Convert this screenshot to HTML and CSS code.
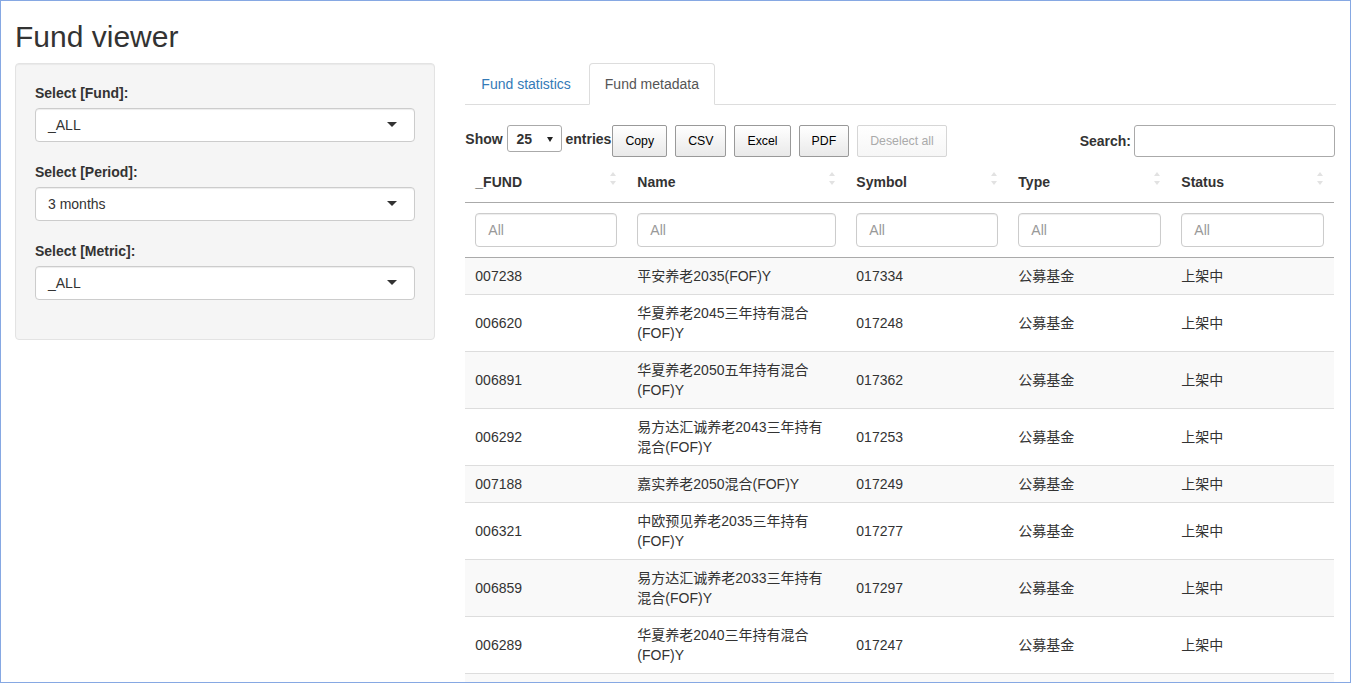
FILE: index.html
```html
<!DOCTYPE html>
<html lang="en">
<head>
<meta charset="utf-8">
<title>Fund viewer</title>
<link rel="stylesheet" href="styles.css">
</head>
<body>
<div class="container">
  <h2 class="title">Fund viewer</h2>
  <div class="row">
    <div class="col-side">
      <div class="well">
        <div class="form-group">
          <label class="control-label">Select [Fund]:</label>
          <div class="selectize"><span>_ALL</span><span class="caret"></span></div>
        </div>
        <div class="form-group">
          <label class="control-label">Select [Period]:</label>
          <div class="selectize"><span>3 months</span><span class="caret"></span></div>
        </div>
        <div class="form-group">
          <label class="control-label">Select [Metric]:</label>
          <div class="selectize"><span>_ALL</span><span class="caret"></span></div>
        </div>
      </div>
    </div>
    <div class="col-main">
      <ul class="nav-tabs">
        <li><a class="tab">Fund statistics</a></li>
        <li><a class="tab active">Fund metadata</a></li>
      </ul>
      <div class="dt-wrapper">
        <div class="dt-top">
          <div class="dt-length">Show <span class="len-select">25<span class="len-arrow"></span></span> entries</div>
          <div class="dt-buttons">
            <button class="dt-button">Copy</button>
            <button class="dt-button">CSV</button>
            <button class="dt-button">Excel</button>
            <button class="dt-button">PDF</button>
            <button class="dt-button disabled">Deselect all</button>
          </div>
          <div class="dt-filter">Search:<span class="search-input"></span></div>
        </div>
        <table class="dt-table">
          <colgroup>
            <col class="c1"><col class="c2"><col class="c3"><col class="c4"><col class="c5">
          </colgroup>
          <thead>
            <tr class="head-row">
              <th class="sorting">_FUND</th>
              <th class="sorting">Name</th>
              <th class="sorting">Symbol</th>
              <th class="sorting">Type</th>
              <th class="sorting">Status</th>
            </tr>
            <tr class="filter-row">
              <td><div class="filter-input">All</div></td>
              <td><div class="filter-input">All</div></td>
              <td><div class="filter-input">All</div></td>
              <td><div class="filter-input">All</div></td>
              <td><div class="filter-input">All</div></td>
            </tr>
          </thead>
          <tbody>
            <tr class="odd"><td>007238</td><td>平安养老2035(FOF)Y</td><td>017334</td><td>公募基金</td><td>上架中</td></tr>
            <tr class="even"><td>006620</td><td>华夏养老2045三年持有混合(FOF)Y</td><td>017248</td><td>公募基金</td><td>上架中</td></tr>
            <tr class="odd"><td>006891</td><td>华夏养老2050五年持有混合(FOF)Y</td><td>017362</td><td>公募基金</td><td>上架中</td></tr>
            <tr class="even"><td>006292</td><td>易方达汇诚养老2043三年持有混合(FOF)Y</td><td>017253</td><td>公募基金</td><td>上架中</td></tr>
            <tr class="odd"><td>007188</td><td>嘉实养老2050混合(FOF)Y</td><td>017249</td><td>公募基金</td><td>上架中</td></tr>
            <tr class="even"><td>006321</td><td>中欧预见养老2035三年持有(FOF)Y</td><td>017277</td><td>公募基金</td><td>上架中</td></tr>
            <tr class="odd"><td>006859</td><td>易方达汇诚养老2033三年持有混合(FOF)Y</td><td>017297</td><td>公募基金</td><td>上架中</td></tr>
            <tr class="even"><td>006289</td><td>华夏养老2040三年持有混合(FOF)Y</td><td>017247</td><td>公募基金</td><td>上架中</td></tr>
            <tr class="odd"><td>&nbsp;</td><td>&nbsp;</td><td>&nbsp;</td><td>&nbsp;</td><td>&nbsp;</td></tr>
          </tbody>
        </table>
      </div>
    </div>
  </div>
</div>
</body>
</html>
```
FILE: styles.css
```css
* { box-sizing: border-box; }

html, body { height: 100%; }

body {
  margin: 0;
  overflow: hidden;
  background: #fff;
  font-family: "Liberation Sans", "Noto Sans CJK SC", sans-serif;
  font-size: 14px;
  line-height: 20px;
  color: #333;
}

/* window frame drawn over the page */
body::after {
  content: "";
  position: fixed;
  top: 0;
  left: 0;
  right: 0;
  bottom: 0;
  border: 1px solid #86a8e3;
  pointer-events: none;
}

.container {
  padding: 0 15px;
}

.title {
  margin: 20px 0 10px;
  font-size: 30px;
  line-height: 33px;
  font-weight: 500;
  color: #333;
}

.row {
  display: flex;
  margin: 0 -15px;
}

.col-side {
  width: 33.3333%;
  padding: 0 15px;
}

.col-main {
  width: 66.6667%;
  padding: 0 15px;
}

/* sidebar */
.well {
  background: #f5f5f5;
  border: 1px solid #e3e3e3;
  border-radius: 4px;
  box-shadow: inset 0 1px 1px rgba(0,0,0,0.05);
  padding: 19px;
}

.form-group {
  padding-bottom: 20px;
}

.control-label {
  display: block;
  font-weight: bold;
  line-height: 20px;
  margin-bottom: 5px;
}

.selectize {
  position: relative;
  display: flex;
  align-items: center;
  height: 34px;
  padding: 6px 12px;
  background: #fff;
  border: 1px solid #ccc;
  border-radius: 4px;
  box-shadow: inset 0 1px 1px rgba(0,0,0,0.075);
  color: #333;
}

.caret {
  position: absolute;
  right: 17px;
  top: 50%;
  margin-top: -3px;
  width: 0;
  height: 0;
  border-style: solid;
  border-width: 5px 5px 0 5px;
  border-color: #333 transparent transparent transparent;
}

/* tabs */
.nav-tabs {
  display: flex;
  list-style: none;
  margin: 0;
  padding: 0;
  border-bottom: 1px solid #ddd;
}

.nav-tabs li {
  margin-bottom: -1px;
}

.tab {
  display: block;
  padding: 10px 15px;
  margin-right: 2px;
  line-height: 20px;
  border: 1px solid transparent;
  border-radius: 4px 4px 0 0;
  color: #337ab7;
  text-decoration: none;
}

.tab.active {
  color: #555;
  background: #fff;
  border-color: #ddd #ddd transparent;
}

/* datatable */
.dt-wrapper {
  padding-top: 20px;
}

.dt-top {
  display: flex;
  align-items: flex-start;
}

.dt-length {
  display: flex;
  align-items: center;
  font-weight: bold;
  white-space: pre;
}

.len-select {
  position: relative;
  display: inline-block;
  width: 55px;
  height: 27px;
  padding: 3px 9px;
  border: 1px solid #aaa;
  border-radius: 3px;
  background: #fff;
  font-weight: bold;
  color: #333;
}

.len-arrow {
  position: absolute;
  right: 8px;
  top: 11px;
  width: 0;
  height: 0;
  border-style: solid;
  border-width: 5px 3px 0 3px;
  border-color: #222 transparent transparent transparent;
}

.dt-buttons {
  display: flex;
  margin-left: 1px;
}

.dt-button {
  margin: 0 8px 0 0;
  padding: 6px 12px;
  height: 32px;
  border: 1px solid #999;
  border-radius: 2px;
  font-family: "Liberation Sans", sans-serif;
  font-size: 12.32px;
  line-height: 18px;
  color: #000;
  background-color: #e9e9e9;
  background-image: linear-gradient(to bottom, #fff 0%, #e9e9e9 100%);
  white-space: nowrap;
}

.dt-button.disabled {
  color: #aaa;
  border-color: #d6d6d6;
  background-color: #f9f9f9;
  background-image: linear-gradient(to bottom, #fff 0%, #f6f6f6 100%);
}

.dt-filter {
  margin-left: auto;
  margin-right: 1px;
  display: flex;
  align-items: center;
  height: 32px;
  font-weight: bold;
}

.search-input {
  display: inline-block;
  width: 201px;
  height: 32px;
  margin-left: 3px;
  border: 1px solid #aaa;
  border-radius: 3px;
  background: #fff;
}

.dt-table {
  width: calc(100% - 2px);
  margin-top: 5px;
  border-collapse: collapse;
  table-layout: fixed;
}

.c1 { width: 162px; }
.c2 { width: 219px; }
.c3 { width: 162px; }
.c4 { width: 163px; }
.c5 { width: 163px; }

.head-row th {
  position: relative;
  text-align: left;
  font-weight: bold;
  padding: 10px 18px 10px 10px;
  line-height: 20px;
  border-bottom: 1px solid #aaa;
}

.sorting::before,
.sorting::after {
  content: "";
  position: absolute;
  right: 11px;
  width: 0;
  height: 0;
  border-style: solid;
  border-color: transparent;
}

.sorting::before {
  top: 10px;
  border-width: 0 3px 4px 3px;
  border-bottom-color: #e2e2e2;
}

.sorting::after {
  top: 19px;
  border-width: 4px 3px 0 3px;
  border-top-color: #e2e2e2;
}

.filter-row td {
  padding: 10px;
  border-bottom: 1px solid #aaa;
}

.filter-input {
  height: 34px;
  padding: 6px 12px;
  border: 1px solid #ccc;
  border-radius: 4px;
  box-shadow: inset 0 1px 1px rgba(0,0,0,0.075);
  color: #999;
  background: #fff;
}

tbody td {
  padding: 8px 10px;
  line-height: 20px;
  border-top: 1px solid #ddd;
  vertical-align: middle;
}

tbody tr:first-child td {
  border-top: none;
}

tbody tr.odd {
  background: #f9f9f9;
}
```
